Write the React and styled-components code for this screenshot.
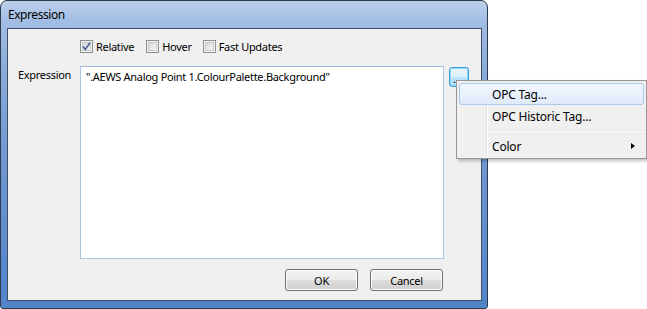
import React from 'react';
import styled, { createGlobalStyle } from 'styled-components';

const GlobalStyle = createGlobalStyle`
  body {
    margin: 0;
    background: #ffffff;
    font-family: 'Noto Sans', 'Open Sans', sans-serif;
    font-size: 11px;
    letter-spacing: -0.3px;
    color: #000000;
  }
`;

const Page = styled.div`
  position: relative;
  width: 647px;
  height: 309px;
  overflow: hidden;
`;

const Window = styled.div`
  box-sizing: border-box;
  width: 488px;
  height: 309px;
  border: 1px solid #2c3a4c;
  border-radius: 7px 7px 3px 3px;
  background: linear-gradient(
    180deg,
    #bcd0eb 0px,
    #a2bde3 20px,
    #8eaedb 60px,
    #6f97d2 160px,
    #5183c9 100%
  );
  padding: 0 5px 7px 6px;
  display: flex;
  flex-direction: column;
`;

const TitleBar = styled.div`
  height: 27px;
  display: flex;
  align-items: center;
  padding-left: 1px;
  padding-bottom: 1px;
  box-sizing: border-box;
  font-size: 12px;
  letter-spacing: -0.45px;
`;

const Client = styled.div`
  flex: 1;
  border: 1px solid #3f4f66;
  background: #f0f0f0;
  padding: 11px 0 0 10px;
  display: flex;
  flex-direction: column;
`;

const CheckRow = styled.div`
  display: flex;
  align-items: center;
  margin-left: 62px;
  height: 13px;
`;

const CheckItem = styled.label`
  display: flex;
  align-items: center;
  margin-right: ${(p) => p.$gap}px;
  line-height: 13px;
`;

const Box = styled.span`
  box-sizing: border-box;
  width: 13px;
  height: 13px;
  border: 1px solid #8e8f8f;
  background: #f4f4f4;
  display: flex;
  align-items: center;
  justify-content: center;
  margin-right: 3px;

  &::before {
    content: '';
    width: 9px;
    height: 9px;
    box-sizing: border-box;
    border: 1px solid #c9c9c9;
    background: linear-gradient(135deg, #d6d6d6, #f6f6f6);
  }
`;

const CheckedBox = styled(Box)`
  position: relative;
  svg {
    position: absolute;
    left: 1px;
    top: 1px;
  }
`;

const ExprRow = styled.div`
  display: flex;
  margin-top: 13px;
`;

const FieldLabel = styled.div`
  width: 62px;
  padding-top: 1px;
`;

const TextBox = styled.div`
  box-sizing: border-box;
  width: 364px;
  height: 193px;
  background: #ffffff;
  border: 1px solid #a9c6e4;
  border-top-color: #9cb9da;
  padding: 3px 5px;
  line-height: 14px;
`;

const DotsButton = styled.div`
  box-sizing: border-box;
  width: 20px;
  height: 20px;
  margin: 1px 0 0 5px;
  border: 1px solid #3c9ed8;
  border-radius: 3px;
  box-shadow: 0 0 0 1px #8ed8f8 inset;
  background: linear-gradient(180deg, #eaf6fd 0%, #d9f0fc 50%, #bee6fd 51%, #a7d9f5 100%);
  font-size: 11px;
  line-height: 11px;
  display: flex;
  align-items: flex-end;
  padding: 0 0 2px 3px;
  letter-spacing: 1px;
`;

const ButtonRow = styled.div`
  display: flex;
  justify-content: flex-end;
  gap: 12px;
  margin-top: 10px;
  padding-right: 38px;
`;

const Button = styled.div`
  box-sizing: border-box;
  width: 73px;
  height: 22px;
  border: 1px solid #707070;
  border-radius: 3px;
  box-shadow: 0 0 0 1px #fcfcfc inset;
  background: linear-gradient(180deg, #f2f2f2 0%, #ebebeb 50%, #dddddd 51%, #cfcfcf 100%);
  display: flex;
  align-items: center;
  justify-content: center;
`;

const Menu = styled.div`
  position: absolute;
  left: 456px;
  top: 80px;
  width: 191px;
  height: 79px;
  box-sizing: border-box;
  border: 1px solid #979797;
  background: #f0f0f0;
  padding: 2px 2px;
  box-shadow: 2px 2px 3px rgba(0, 0, 0, 0.25);
  font-size: 12px;
  letter-spacing: -0.2px;

  &::before {
    content: '';
    position: absolute;
    left: 29px;
    top: 2px;
    bottom: 2px;
    width: 1px;
    background: #e2e3e3;
    box-shadow: 1px 0 0 #ffffff;
  }
`;

const MenuItem = styled.div`
  position: relative;
  box-sizing: border-box;
  height: 22px;
  display: flex;
  align-items: center;
  padding-left: 32px;
  border: 1px solid ${(p) => (p.$active ? '#a8c8ec' : 'transparent')};
  border-radius: 3px;
  background: ${(p) =>
    p.$active ? 'linear-gradient(180deg, #f2f7fd 0%, #dfeafa 100%)' : 'transparent'};
  z-index: 1;
`;

const Separator = styled.div`
  height: 1px;
  margin: 3px 0 3px 30px;
  background: #e2e3e3;
  border-bottom: 1px solid #ffffff;
`;

const Arrow = styled.span`
  position: absolute;
  right: 8px;
  top: 7px;
  width: 0;
  height: 0;
  border-top: 3.5px solid transparent;
  border-bottom: 3.5px solid transparent;
  border-left: 4px solid #000000;
`;

const Check = ({ label, checked, gap }) => (
  <CheckItem $gap={gap}>
    {checked ? (
      <CheckedBox>
        <svg width="9" height="9" viewBox="0 0 9 9">
          <path d="M1 4.5 L3.3 7.5 L8 0.8" fill="none" stroke="#4a5f97" strokeWidth="1.6" />
        </svg>
      </CheckedBox>
    ) : (
      <Box />
    )}
    {label}
  </CheckItem>
);

const App = () => {
  return (
    <>
      <GlobalStyle />
      <Page>
        <Window>
          <TitleBar>Expression</TitleBar>
          <Client>
            <CheckRow>
              <Check label="Relative" checked gap={12} />
              <Check label="Hover" gap={11} />
              <Check label="Fast Updates" gap={0} />
            </CheckRow>
            <ExprRow>
              <FieldLabel>Expression</FieldLabel>
              <TextBox>".AEWS Analog Point 1.ColourPalette.Background"</TextBox>
              <DotsButton>...</DotsButton>
            </ExprRow>
            <ButtonRow>
              <Button>OK</Button>
              <Button>Cancel</Button>
            </ButtonRow>
          </Client>
        </Window>
        <Menu>
          <MenuItem $active>OPC Tag...</MenuItem>
          <MenuItem>OPC Historic Tag...</MenuItem>
          <Separator />
          <MenuItem>
            Color
            <Arrow />
          </MenuItem>
        </Menu>
      </Page>
    </>
  );
};

export default App;
